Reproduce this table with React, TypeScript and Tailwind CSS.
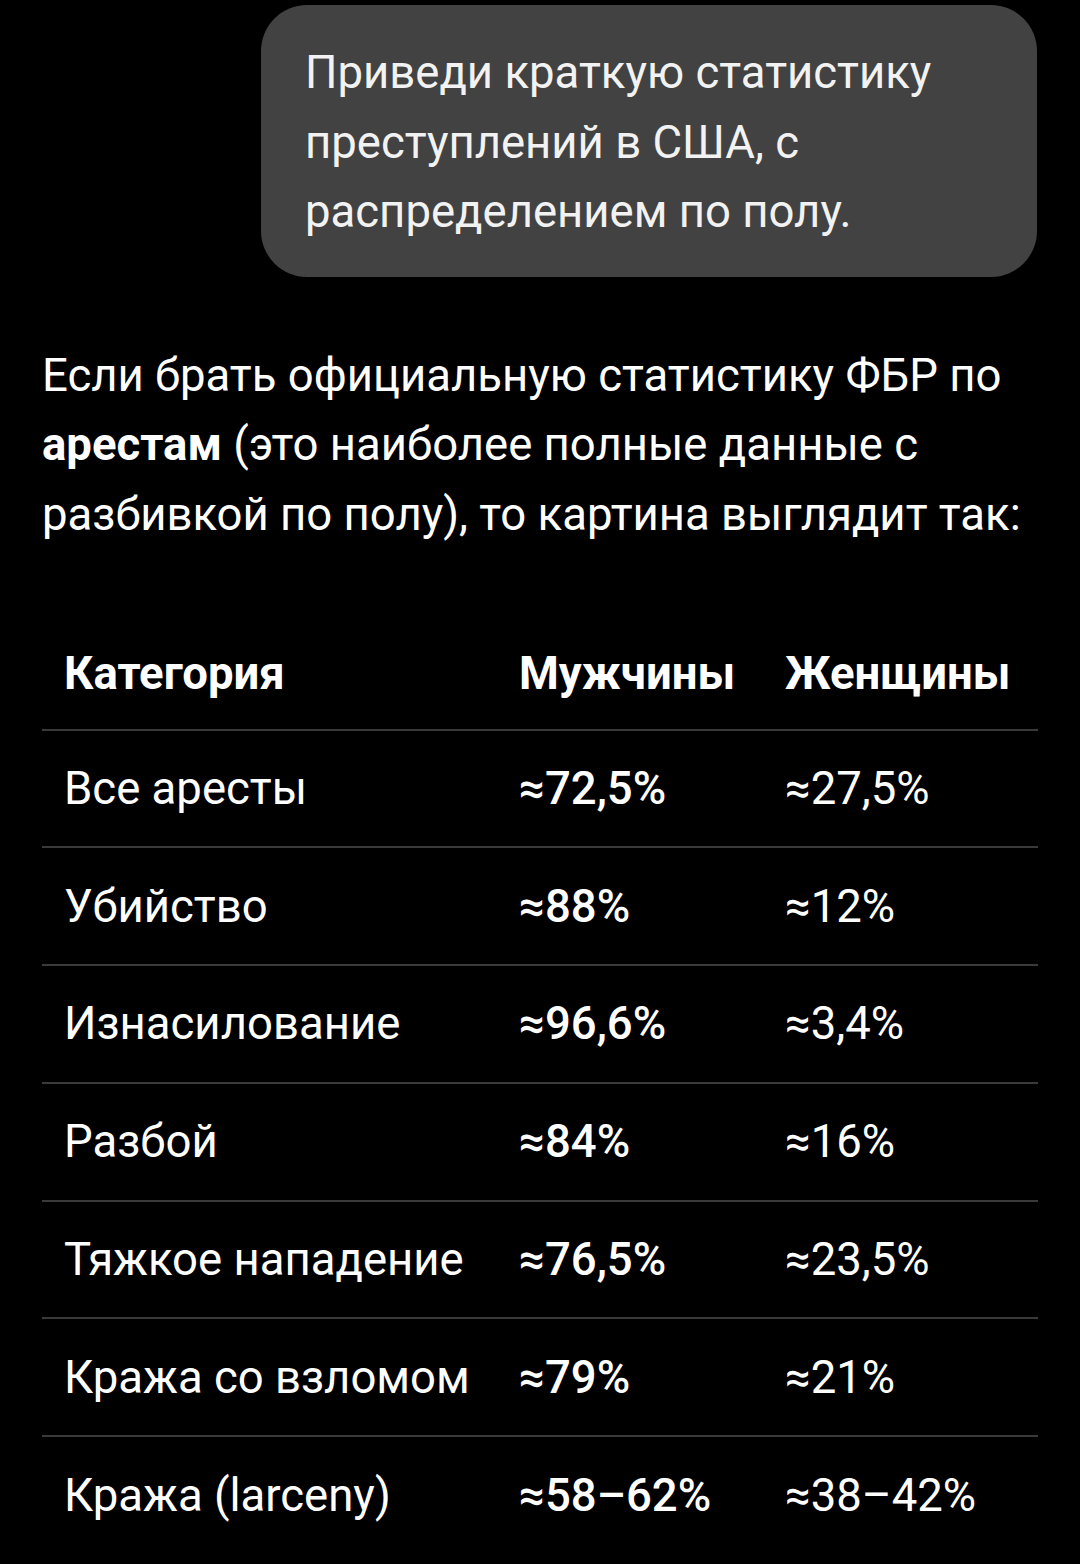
const rows: [string, string, string][] = [
  ["Все аресты", "≈72,5%", "≈27,5%"],
  ["Убийство", "≈88%", "≈12%"],
  ["Изнасилование", "≈96,6%", "≈3,4%"],
  ["Разбой", "≈84%", "≈16%"],
  ["Тяжкое нападение", "≈76,5%", "≈23,5%"],
  ["Кража со взломом", "≈79%", "≈21%"],
  ["Кража (larceny)", "≈58–62%", "≈38–42%"],
];

export default function App() {
  return (
    <div className="min-h-screen bg-black font-['Roboto',sans-serif] text-[45.5px] leading-[69.5px] text-white">
      {/* user bubble */}
      <div className="flex justify-end pt-[5px] pr-[43px]">
        <div className="w-[776px] rounded-[46px] bg-[#424242] pl-[44px] pr-[40px] pt-[33px] pb-[30px] text-[#f2f2f2]">
          Приведи краткую статистику преступлений в США, с распределением по полу.
        </div>
      </div>

      {/* answer */}
      <p className="mt-[64px] px-[42px]">
        Если брать официальную статистику ФБР по <span className="font-bold">арестам</span> (это наиболее
        полные данные с разбивкой по полу), то картина выглядит так:
      </p>

      <table className="mx-[42px] mt-[67px] w-[996px] table-fixed border-collapse">
        <colgroup>
          <col className="w-[455px]" />
          <col className="w-[266px]" />
          <col className="w-[275px]" />
        </colgroup>
        <thead>
          <tr className="border-b-2 border-[#3a3a3a]">
            <th className="pl-[22px] pt-[23px] pb-[20px] text-left font-bold">Категория</th>
            <th className="pl-[22px] pt-[23px] pb-[20px] text-left font-bold">Мужчины</th>
            <th className="pl-[22px] pt-[23px] pb-[20px] text-left font-bold">Женщины</th>
          </tr>
        </thead>
        <tbody>
          {rows.map(([cat, m, w], i) => (
            <tr key={cat} className={i < rows.length - 1 ? "border-b-2 border-[#3a3a3a]" : ""}>
              <td className="whitespace-nowrap pt-[23.4px] pb-[22.9px] pl-[22px]">{cat}</td>
              <td className="whitespace-nowrap pt-[23.4px] pb-[22.9px] pl-[22px] font-medium">{m}</td>
              <td className="whitespace-nowrap pt-[23.4px] pb-[22.9px] pl-[22px]">{w}</td>
            </tr>
          ))}
        </tbody>
      </table>
    </div>
  );
}
